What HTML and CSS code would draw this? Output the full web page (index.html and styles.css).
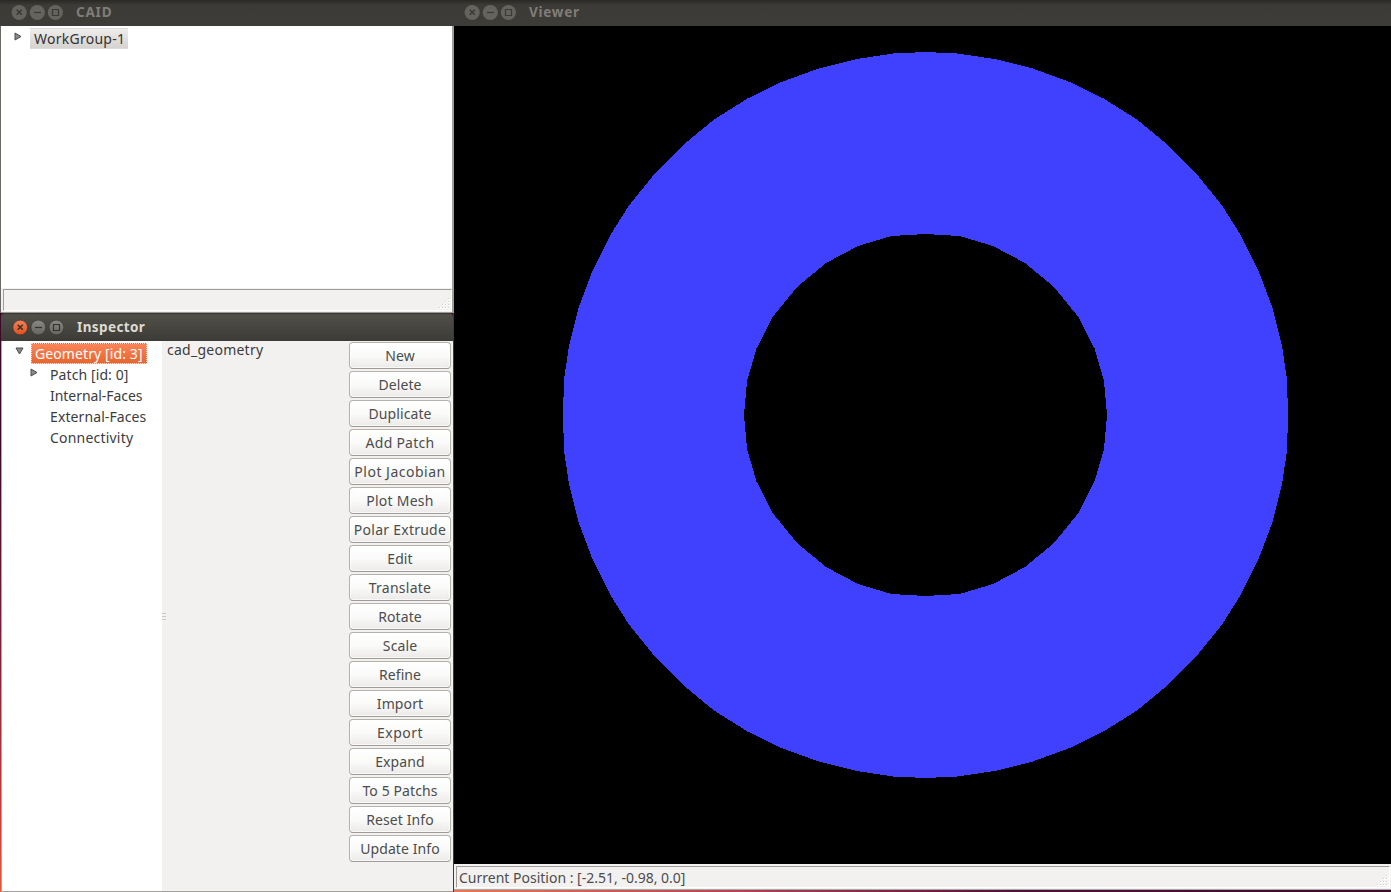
FILE: index.html
```html
<!DOCTYPE html>
<html lang="en">
<head>
<meta charset="utf-8">
<title>CAID</title>
<link rel="stylesheet" href="styles.css">
</head>
<body>
<svg class="defs" width="0" height="0">
  <defs>
    <linearGradient id="grey" x1="0" y1="0" x2="0" y2="1"><stop offset="0" stop-color="#8a8981"/><stop offset="1" stop-color="#65645d"/></linearGradient>
    <linearGradient id="orange" x1="0" y1="0" x2="0" y2="1"><stop offset="0" stop-color="#f68159"/><stop offset="1" stop-color="#e4501d"/></linearGradient>
    <g id="glyphs" fill="none" stroke-width="1.2">
      <path d="M5.7 5.7l5.1 5.1M10.8 5.7l-5.1 5.1" stroke-width="1.5"/>
      <path d="M23 8.5h7"/>
      <path d="M41.5 5.5h6v6h-6z"/>
    </g>
    <g id="controls-idle">
      <g fill="#64635d"><circle cx="8.2" cy="8.5" r="7.6"/><circle cx="26.3" cy="8.5" r="7.6"/><circle cx="44.4" cy="8.5" r="7.6"/></g>
      <use href="#glyphs" stroke="#3a3935"/>
    </g>
    <g id="grip">
      <g fill="#fff"><path d="M10 1h2v2h-2zM7 4h2v2h-2zM10 4h2v2h-2zM4 7h2v2h-2zM7 7h2v2h-2zM10 7h2v2h-2zM1 10h2v2h-2zM4 10h2v2h-2zM7 10h2v2h-2zM10 10h2v2h-2z"/></g>
      <g fill="#d0cecb"><path d="M10 1h1v1h-1zM7 4h1v1h-1zM10 4h1v1h-1zM4 7h1v1h-1zM7 7h1v1h-1zM10 7h1v1h-1zM1 10h1v1h-1zM4 10h1v1h-1zM7 10h1v1h-1zM10 10h1v1h-1z"/></g>
    </g>
    <path id="quadrant" d="M-1-363H0L32-361.500 69-356 107-346.500 145.500-332.500 178-316.500 211.500-295.500 240-272 271.500-240.500 296.500-209.500 315.500-179.500 334-141.500 347-107 356.500-69 361.500-35.500 362.500 0V1H181.500V0L178.500-34 169-66.500 152.500-98.500 128.500-128 99.500-152 67.500-169 34-179 0-181H-1Z"/>
  </defs>
</svg>
<div class="desktop">
  <div class="left">
    <section class="window caid">
      <header class="titlebar"><svg class="controls" width="54" height="17"><use href="#controls-idle"/></svg><span class="title t-caid">CAID</span></header>
      <div class="workgroups">
        <svg class="arrow" width="8" height="9"><path d="M1 1L7 4.5 1 8z"/></svg>
        <span class="workgroup">WorkGroup-1</span>
      </div>
      <footer class="status"><div class="field"><svg width="13" height="13"><use href="#grip"/></svg></div></footer>
    </section>
    <section class="window inspector">
      <header class="titlebar active">
        <svg class="controls" width="54" height="17">
          <circle cx="8.2" cy="8.5" r="7.4" fill="url(#orange)" stroke="#353430" stroke-width=".7"/>
          <circle cx="26.3" cy="8.5" r="7.4" fill="url(#grey)" stroke="#353430" stroke-width=".7"/>
          <circle cx="44.4" cy="8.5" r="7.4" fill="url(#grey)" stroke="#353430" stroke-width=".7"/>
          <use href="#glyphs" stroke="#35322d"/>
        </svg><span class="title t-inspector">Inspector</span>
      </header>
      <div class="panes">
        <div class="tree">
          <div class="root"><svg class="arrow" width="9" height="8"><path d="M1 1H8L4.5 7z"/></svg><span class="selected">Geometry [id: 3]</span></div>
          <div class="node"><svg class="arrow" width="8" height="9"><path d="M1 1L7 4.5 1 8z"/></svg><span class="t-patch">Patch [id: 0]</span></div>
          <div class="node leaf"><span class="t-internal">Internal-Faces</span></div>
          <div class="node leaf"><span class="t-external">External-Faces</span></div>
          <div class="node leaf"><span class="t-conn">Connectivity</span></div>
        </div>
        <div class="sash"><i></i><i></i><i></i></div>
        <div class="info"><span class="t-cad">cad_geometry</span></div>
        <div class="actions">
          <button>New</button>
          <button>Delete</button>
          <button>Duplicate</button>
          <button class="wide">Add Patch</button>
          <button class="wider">Plot Jacobian</button>
          <button class="wide">Plot Mesh</button>
          <button class="wide">Polar Extrude</button>
          <button>Edit</button>
          <button class="wide">Translate</button>
          <button>Rotate</button>
          <button>Scale</button>
          <button>Refine</button>
          <button>Import</button>
          <button class="wider">Export</button>
          <button>Expand</button>
          <button>To 5 Patchs</button>
          <button>Reset Info</button>
          <button>Update Info</button>
        </div>
      </div>
    </section>
  </div>
  <section class="window viewer">
    <header class="titlebar"><svg class="controls" width="54" height="17"><use href="#controls-idle"/></svg><span class="title t-viewer">Viewer</span></header>
    <svg class="scene" width="937" height="838" viewBox="0 0 937 838">
      <g transform="translate(471.5 389)" fill="#4040ff" shape-rendering="crispEdges">
        <use href="#quadrant"/>
        <use href="#quadrant" transform="scale(-1 1)"/>
        <use href="#quadrant" transform="scale(1 -1)"/>
        <use href="#quadrant" transform="scale(-1 -1)"/>
      </g>
    </svg>
    <footer class="status"><div class="field"><span class="t-position">Current Position : [-2.51, -0.98, 0.0]</span><svg width="13" height="13"><use href="#grip"/></svg></div></footer>
  </section>
</div>
</body>
</html>
```
FILE: styles.css
```css
* { box-sizing: border-box; }
body { margin: 0; overflow: hidden; background: #000; color: #3c3c3c; font: 14px/20px "Noto Sans", "Open Sans", sans-serif; white-space: nowrap; }
.defs { position: absolute; }
svg { display: block; flex: none; }
.desktop { display: grid; grid-template-columns: 454px 937px; height: 892px; }
.left { display: flex; flex-direction: column; min-width: 0; background: linear-gradient(#3c0a25 0, #3c0a25 50%, #85243b 75%, #c83b38 90%, #e4553b 100%); }
.window { display: flex; flex-direction: column; }

.titlebar { display: flex; align-items: center; flex: none; height: 26px; padding: 0 0 2px 10px; background: linear-gradient(#292825, #3c3b37 5px, #3d3c38); color: #807d78; }
.title { font-weight: 700; font-size: 13.5px; line-height: 20px; margin-left: 11px; }
.t-caid { letter-spacing: .8px; }
.t-viewer { letter-spacing: .75px; }
.t-inspector { letter-spacing: .4px; }
.titlebar.active { height: 28px; padding: 0 0 0 11px; background: linear-gradient(#35342f 0, #504f48 2px, #3c3b37 100%); color: #dfdbd2; border-radius: 4px 4px 0 0; }

.caid { height: 313px; border-right: 2px solid #a19e99; border-left: 1px solid #6a6863; background: #fff; }
.caid .titlebar { margin: 0 -2px 0 -1px; padding-left: 11px; }
.workgroups { display: flex; flex: 1; align-items: flex-start; padding: 2px 0 0 13px; }
.workgroups .arrow { margin-top: 4px; }
.workgroup { width: 98px; height: 21px; margin-left: 8px; padding-left: 4px; background: linear-gradient(#eeedec, #d5d2cf); border: 1px solid #dedbd9; border-width: 1px 0; color: #333; letter-spacing: .25px; line-height: 20px; }
.arrow path { fill: #8b8b8b; stroke: #4b4b4b; stroke-width: 1; }

.status { flex: none; height: 25px; padding: 2px 1px 2px 2px; background: #f2f1f0; }
.field { display: flex; align-items: center; justify-content: flex-end; height: 22px; border: 1px solid #9f9d9a; border-right-color: #fff; border-bottom-color: #fff; }
.caid .status { border-bottom: 1px solid #9b9995; padding: 1px 0 2px 2px; }
.field svg { margin-top: 6px; }

.inspector { flex: 1; margin-left: 1px; border-right: 1px solid #3c3b37; }
.panes { display: flex; flex: 1; border-left: 1px solid #aaa8a5; border-bottom: 1px solid #a3a19e; background: #f2f1f0; }
.tree { width: 160px; padding: 2px 0 0 13px; background: #fff; }
.root { display: flex; align-items: flex-start; height: 21px; }
.root .arrow { margin-top: 4px; }
.selected { width: 116px; height: 21px; margin-left: 7px; padding-left: 3px; line-height: 19px; letter-spacing: .1px; color: #fff; background: linear-gradient(#f9855a, #e8652f); border: 1px dotted #ffd5c2; }
.node { display: flex; height: 21px; padding-left: 15px; line-height: 21px; }
.node .arrow { margin: 4px 12px 0 0; }
.leaf { padding-left: 35px; }
.t-patch, .t-external { letter-spacing: .1px; }
.t-internal { letter-spacing: -.05px; }
.t-conn { letter-spacing: .2px; }
.sash { display: flex; flex-direction: column; justify-content: center; gap: 2px; width: 5px; }
.sash i { height: 1px; width: 4px; background: #cbc9c6; }
.info { flex: 1; line-height: 17px; letter-spacing: .25px; }
.actions { display: flex; flex-direction: column; gap: 2px; width: 102px; margin-right: 2px; padding-top: 1px; }
button { height: 27px; padding: 1px 0 0; border: 1px solid #b4b1ad; border-bottom-color: #9f9c98; border-radius: 4px; background: linear-gradient(#fff, #fafaf9 50%, #ebeae9); box-shadow: inset 0 0 0 1px rgba(255,255,255,.7); color: #4c4c4c; font: inherit; line-height: 20px; letter-spacing: .1px; white-space: nowrap; }
.wide { letter-spacing: .25px; }
.wider { letter-spacing: .5px; }

.viewer .scene { background: #000; }
.viewer .status { height: 26px; border-bottom: 1px solid #aaa; }
.viewer .field { justify-content: space-between; padding-left: 2px; color: #4c4c4c; }
.t-position { padding-top: 2px; }
.viewer { background: linear-gradient(90deg, #e57855, #b34453 30%, #501039 60%, #40082b); }
```
